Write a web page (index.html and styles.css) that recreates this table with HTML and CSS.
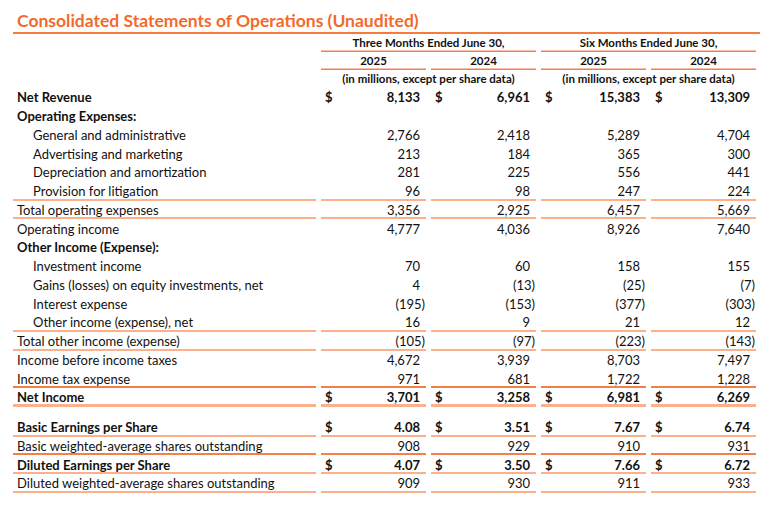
FILE: index.html
```html
<!DOCTYPE html>
<html lang="en">
<head>
<meta charset="utf-8">
<title>Consolidated Statements of Operations</title>
<link rel="stylesheet" href="styles.css">
</head>
<body>
<h1 class="title">Consolidated Statements of Operations (Unaudited)</h1>
<table class="fin">
  <colgroup>
    <col class="c-label"><col class="c-num"><col class="c-num"><col class="c-num"><col class="c-num">
  </colgroup>
  <thead>
    <tr class="h1">
      <th></th>
      <th colspan="2" class="hrule">Three Months Ended June 30,</th>
      <th colspan="2" class="hrule">Six Months Ended June 30,</th>
    </tr>
    <tr class="h2">
      <th></th>
      <th class="hrule">2025</th><th class="hrule">2024</th>
      <th class="hrule">2025</th><th class="hrule">2024</th>
    </tr>
    <tr class="h3">
      <th></th>
      <th colspan="2">(in millions, except per share data)</th>
      <th colspan="2">(in millions, except per share data)</th>
    </tr>
  </thead>
  <tbody>
    <tr class="bold">
      <td class="lbl">Net Revenue</td>
      <td class="n"><span class="cur">$</span>8,133</td>
      <td class="n"><span class="cur">$</span>6,961</td>
      <td class="n"><span class="cur">$</span>15,383</td>
      <td class="n"><span class="cur">$</span>13,309</td>
    </tr>
    <tr class="bold">
      <td class="lbl">Operating Expenses:</td><td></td><td></td><td></td><td></td>
    </tr>
    <tr>
      <td class="lbl ind">General and administrative</td>
      <td class="n">2,766</td><td class="n">2,418</td><td class="n">5,289</td><td class="n">4,704</td>
    </tr>
    <tr>
      <td class="lbl ind">Advertising and marketing</td>
      <td class="n">213</td><td class="n">184</td><td class="n">365</td><td class="n">300</td>
    </tr>
    <tr>
      <td class="lbl ind">Depreciation and amortization</td>
      <td class="n">281</td><td class="n">225</td><td class="n">556</td><td class="n">441</td>
    </tr>
    <tr class="rule">
      <td class="lbl ind">Provision for litigation</td>
      <td class="n">96</td><td class="n">98</td><td class="n">247</td><td class="n">224</td>
    </tr>
    <tr class="rule">
      <td class="lbl">Total operating expenses</td>
      <td class="n">3,356</td><td class="n">2,925</td><td class="n">6,457</td><td class="n">5,669</td>
    </tr>
    <tr>
      <td class="lbl">Operating income</td>
      <td class="n">4,777</td><td class="n">4,036</td><td class="n">8,926</td><td class="n">7,640</td>
    </tr>
    <tr class="bold">
      <td class="lbl">Other Income (Expense):</td><td></td><td></td><td></td><td></td>
    </tr>
    <tr>
      <td class="lbl ind">Investment income</td>
      <td class="n">70</td><td class="n">60</td><td class="n">158</td><td class="n">155</td>
    </tr>
    <tr>
      <td class="lbl ind">Gains (losses) on equity investments, net</td>
      <td class="n">4</td><td class="n">(13<span class="p">)</span></td><td class="n">(25<span class="p">)</span></td><td class="n">(7<span class="p">)</span></td>
    </tr>
    <tr>
      <td class="lbl ind">Interest expense</td>
      <td class="n">(195<span class="p">)</span></td><td class="n">(153<span class="p">)</span></td><td class="n">(377<span class="p">)</span></td><td class="n">(303<span class="p">)</span></td>
    </tr>
    <tr class="rule">
      <td class="lbl ind">Other income (expense), net</td>
      <td class="n">16</td><td class="n">9</td><td class="n">21</td><td class="n">12</td>
    </tr>
    <tr class="rule">
      <td class="lbl">Total other income (expense)</td>
      <td class="n">(105<span class="p">)</span></td><td class="n">(97<span class="p">)</span></td><td class="n">(223<span class="p">)</span></td><td class="n">(143<span class="p">)</span></td>
    </tr>
    <tr>
      <td class="lbl">Income before income taxes</td>
      <td class="n">4,672</td><td class="n">3,939</td><td class="n">8,703</td><td class="n">7,497</td>
    </tr>
    <tr class="rule-dark">
      <td class="lbl">Income tax expense</td>
      <td class="n">971</td><td class="n">681</td><td class="n">1,722</td><td class="n">1,228</td>
    </tr>
    <tr class="bold rule-double">
      <td class="lbl">Net Income</td>
      <td class="n"><span class="cur">$</span>3,701</td>
      <td class="n"><span class="cur">$</span>3,258</td>
      <td class="n"><span class="cur">$</span>6,981</td>
      <td class="n"><span class="cur">$</span>6,269</td>
    </tr>
    <tr class="spacer"><td></td><td></td><td></td><td></td><td></td></tr>
    <tr class="bold rule">
      <td class="lbl">Basic Earnings per Share</td>
      <td class="n"><span class="cur">$</span>4.08</td>
      <td class="n"><span class="cur">$</span>3.51</td>
      <td class="n"><span class="cur">$</span>7.67</td>
      <td class="n"><span class="cur">$</span>6.74</td>
    </tr>
    <tr class="rule-dark">
      <td class="lbl">Basic weighted-average shares outstanding</td>
      <td class="n">908</td><td class="n">929</td><td class="n">910</td><td class="n">931</td>
    </tr>
    <tr class="bold rule">
      <td class="lbl">Diluted Earnings per Share</td>
      <td class="n"><span class="cur">$</span>4.07</td>
      <td class="n"><span class="cur">$</span>3.50</td>
      <td class="n"><span class="cur">$</span>7.66</td>
      <td class="n"><span class="cur">$</span>6.72</td>
    </tr>
    <tr class="rule">
      <td class="lbl">Diluted weighted-average shares outstanding</td>
      <td class="n">909</td><td class="n">930</td><td class="n">911</td><td class="n">933</td>
    </tr>
  </tbody>
</table>
</body>
</html>
```

FILE: styles.css
```css
html, body {
  background: #ffffff;
}
body {
  margin: 8px;
  font-family: Lato, "Liberation Sans", sans-serif;
  color: #111111;
}
.title {
  margin: 0 0 0 5px;
  padding: 3px 0 1px 4px;
  font-size: 17.5px;
  line-height: 20px;
  font-weight: 700;
  color: #f26a2c;
  border-bottom: 2px solid #f47a3e;
}
.fin {
  border-collapse: separate;
  border-spacing: 5px 0;
  table-layout: fixed;
  width: 748px;
  font-size: 13px;
}
.c-label { width: 303px; }
.c-num { width: 105px; }
.fin th {
  padding: 0;
  font-weight: 700;
  font-size: 11.5px;
  text-align: center;
  height: 18px;
  line-height: 14px;
  vertical-align: middle;
}
.fin th.hrule {
  box-shadow: inset 0 -1.5px 0 #f47f48;
}
.fin td {
  padding: 0;
  height: 18.75px;
  line-height: 14px;
  vertical-align: middle;
  white-space: nowrap;
}
.fin td.lbl { padding-left: 4px; }
.fin td.lbl.ind { padding-left: 20px; }
.fin td.n {
  text-align: right;
  padding: 0 6px 0 4px;
}
.cur {
  float: left;
}
.p {
  margin-right: -5px;
}
.bold td { font-weight: 700; }
.rule td { box-shadow: inset 0 -2px 0 #fbb18c; }
.rule-dark td { box-shadow: inset 0 -2px 0 #f47f48; }
.rule-double td { box-shadow: inset 0 -3px 0 #fbb18c; }
.fin tr.spacer td { height: 11px; }
```
